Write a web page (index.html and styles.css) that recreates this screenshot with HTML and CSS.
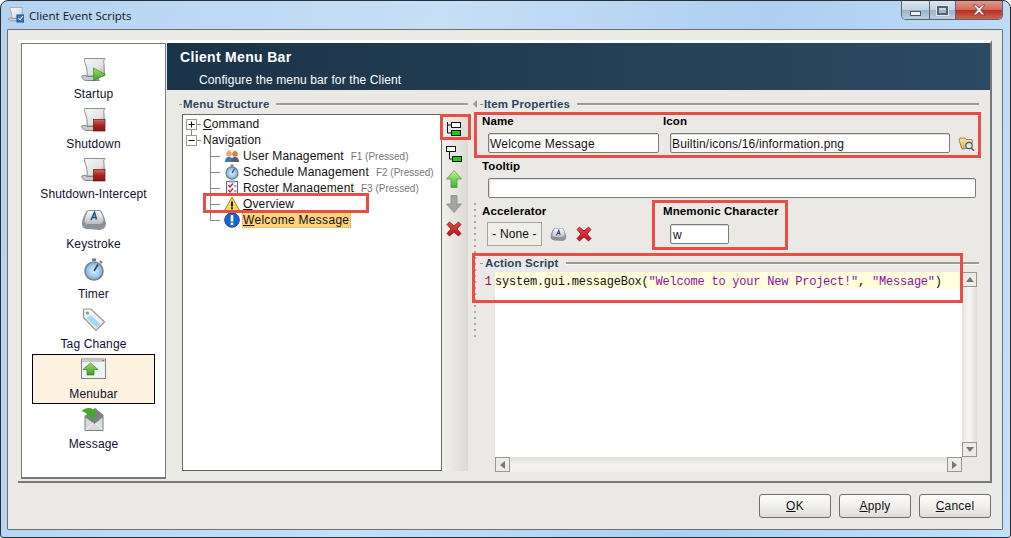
FILE: index.html
```html
<!DOCTYPE html>
<html lang="en">
<head>
<meta charset="utf-8">
<title>Client Event Scripts</title>
<link rel="stylesheet" href="styles.css">
</head>
<body>
<svg class="defs" width="0" height="0" aria-hidden="true">
  <defs>
    <linearGradient id="paper" x1="0" y1="0" x2="1" y2="1"><stop offset="0" stop-color="#f7f8f8"/><stop offset=".6" stop-color="#e2e4e4"/><stop offset="1" stop-color="#a9adad"/></linearGradient>
    <linearGradient id="green" x1="0" y1="0" x2="0" y2="1"><stop offset="0" stop-color="#a9dc70"/><stop offset="1" stop-color="#3c9a20"/></linearGradient>
    <linearGradient id="red" x1="0" y1="0" x2="0" y2="1"><stop offset="0" stop-color="#cf6a6a"/><stop offset=".5" stop-color="#a82424"/><stop offset="1" stop-color="#8a1414"/></linearGradient>
    <linearGradient id="keycap" x1="0" y1="0" x2="0" y2="1"><stop offset="0" stop-color="#fafafa"/><stop offset="1" stop-color="#b8bcc0"/></linearGradient>
    <radialGradient id="dial"><stop offset="0" stop-color="#e2f1fc"/><stop offset="1" stop-color="#72b2e6"/></radialGradient>
    <linearGradient id="upg" x1="0" y1="0" x2="0" y2="1"><stop offset="0" stop-color="#c6f29c"/><stop offset="1" stop-color="#3fae2c"/></linearGradient>
    <linearGradient id="folder" x1="0" y1="0" x2="0" y2="1"><stop offset="0" stop-color="#fbeeb4"/><stop offset="1" stop-color="#d4a94e"/></linearGradient>
    <linearGradient id="xred" x1="0" y1="0" x2="0" y2="1"><stop offset="0" stop-color="#e5474a"/><stop offset="1" stop-color="#b9141a"/></linearGradient>
    <symbol id="scroll" viewBox="0 0 26 24">
      <path d="M3.5 0.5 H24 C22.5 2 22.5 4 23 6 L23.5 18 H6 C6.5 14 6 10 4.5 6 C3.8 4 3 2 3.5 .5Z" fill="url(#paper)" stroke="#8c9090"/>
      <path d="M.7 18 C3 17 5 17.3 6 18.5 H17 C17 20 17.5 21.5 18.5 22.5 H5 C3 22.5 1.2 20.5 .7 18Z" fill="#c9cccc" stroke="#808484"/>
    </symbol>
    <symbol id="xmark" viewBox="0 0 16 16">
      <path d="M1 3.5 L3.5 1 L8 5 L12.5 1 L15 3.5 L11 8 L15 12.5 L12.5 15 L8 11 L3.5 15 L1 12.5 L5 8Z" fill="url(#xred)" stroke="#8e1015" stroke-width=".8"/>
    </symbol>
    <symbol id="key" viewBox="0 0 26 22">
      <path d="M7 1 H18 C21 1 24 9 25 14 C25 18 23 20 19 21 L7 20 C3 20 1 18 1 15 C1 10 4 3 7 1Z" fill="#8c9298"/>
      <path d="M7.5 2 H18 C20 2 22 7 22.5 11 C22 14 20 15 17 15 H7 C5 15 3.5 13.5 3.5 12 C4 8 5.5 4 7.5 2Z" fill="url(#keycap)"/>
    </symbol>
  </defs>
</svg>

<div class="window">
  <header class="titlebar">
    <div class="title">
      <svg class="title-icon" viewBox="0 0 16 16"><use href="#scroll" width="16" height="15"/><rect x="9" y="8" width="7" height="7" fill="#3b79c8" stroke="#214e8d"/><path d="M10.5 11 L12 13 L15 9" fill="none" stroke="#fff"/></svg>
      <span>Client Event Scripts</span>
    </div>
    <div class="controls">
      <div class="ctl ctl-min"><i></i></div>
      <div class="ctl ctl-max"><i></i></div>
      <div class="ctl ctl-close"><svg viewBox="0 0 13 11" width="16" height="12"><path d="M1 1 H4 L6.5 3.6 L9 1 H12 L8 5.5 L12 10 H9 L6.5 7.4 L4 10 H1 L5 5.5Z" fill="#f3ecec" stroke="#6c3636" stroke-width=".7"/></svg></div>
    </div>
  </header>

  <div class="client">
    <div class="main">
      <nav class="sidebar">
        <div class="nav-item">
          <svg class="nav-icon" viewBox="0 0 26 24"><use href="#scroll" width="26" height="24"/><path d="M12.5 10 L24.5 16.5 L12.5 23Z" fill="url(#green)" stroke="#3b8a22" stroke-width=".7"/></svg>
          <span>Startup</span>
        </div>
        <div class="nav-item">
          <svg class="nav-icon" viewBox="0 0 26 24"><use href="#scroll" width="26" height="24"/><rect x="12.5" y="11.5" width="11.5" height="11.5" fill="url(#red)" stroke="#701212" stroke-width=".7"/></svg>
          <span>Shutdown</span>
        </div>
        <div class="nav-item">
          <svg class="nav-icon" viewBox="0 0 26 24"><use href="#scroll" width="26" height="24"/><rect x="12.5" y="11.5" width="11.5" height="11.5" fill="url(#red)" stroke="#701212" stroke-width=".7"/></svg>
          <span>Shutdown-Intercept</span>
        </div>
        <div class="nav-item">
          <svg class="nav-icon" viewBox="0 0 26 24"><use href="#key" x="0" y="1" width="26" height="22"/><path d="M10 12 L13.5 4.5 L15.5 11.5 M11 9.5 H15" fill="none" stroke="#25527f" stroke-width="1.6"/></svg>
          <span>Keystroke</span>
        </div>
        <div class="nav-item">
          <svg class="nav-icon" viewBox="0 0 26 24"><rect x="11" y="0.5" width="4" height="2.5" fill="#777"/><path d="M19 3 L21 5" stroke="#777" stroke-width="2"/><circle cx="13" cy="13" r="9" fill="url(#dial)" stroke="#7d8284" stroke-width="1.6"/><path d="M13 13 L17 6.5" stroke="#25405c" stroke-width="1.6"/></svg>
          <span>Timer</span>
        </div>
        <div class="nav-item">
          <svg class="nav-icon" viewBox="0 0 26 24"><path d="M2.5 1 H10 L23.5 14 L15 22.5 L2.5 9.5Z" fill="#eff1f2" stroke="#92979a" stroke-width="1.2"/><circle cx="6.5" cy="5" r="1.6" fill="#8b9094"/><path d="M9.5 7 L19.5 16 L15.5 19.5 L6 10.5Z" fill="#a5d5f7"/></svg>
          <span>Tag Change</span>
        </div>
        <div class="nav-item is-selected">
          <svg class="nav-icon" viewBox="0 0 26 24"><rect x=".5" y="1" width="24" height="19.5" fill="#eef3f3" stroke="#7f8585"/><rect x="1" y="1.5" width="23" height="2.5" fill="#c6ccce"/><rect x="21" y="2" width="2" height="1" fill="#e04a4a"/><path d="M9.5 5 L17 11.5 H13 V17 H6 V11.5 H2Z" fill="url(#green)" stroke="#2f8a1e" stroke-width=".7"/></svg>
          <span>Menubar</span>
        </div>
        <div class="nav-item">
          <svg class="nav-icon" viewBox="0 0 26 24"><path d="M3.5 8 L14 0 L22.5 7 V23 H3.5Z" fill="#7d8283"/><path d="M4.5 9.5 L13.5 16 L21.5 9.5 V22 H4.5Z" fill="#d8dbdb"/><path d="M4.5 22 L12.5 15 M21.5 22 L14.5 15" stroke="#f6f6f6"/><path d="M.5 3 C4 0 9 -1 12 1.5 L15.5 .5 L14 8.5 L11 14 C10 8 6 5 .5 3Z" fill="#45a82f"/></svg>
          <span>Message</span>
        </div>
      </nav>

      <section class="content">
        <div class="banner">
          <h1>Client Menu Bar</h1>
          <p>Configure the menu bar for the Client</p>
        </div>
        <div class="panes">
          <div class="pane-left">
            <div class="group-title group-title-left"><b>Menu Structure</b></div>
            <div class="tree-row">
              <div class="tree">
                <div class="node node-root"><span class="box"><svg viewBox="0 0 9 9" width="9" height="9"><path d="M1.5 4.5 H7.5 M4.5 1.5 V7.5" stroke="#111"/></svg></span><span class="stub-root"></span><span class="label"><u>C</u>ommand</span></div>
                <div class="node node-root node-root-next"><span class="box"><svg viewBox="0 0 9 9" width="9" height="9"><path d="M1.5 4.5 H7.5" stroke="#111"/></svg></span><span class="stub-root"></span><span class="label">Navigation</span></div>
                <div class="node node-child">
                  <span class="stub"></span>
                  <svg class="tree-icon" viewBox="0 0 16 16"><circle cx="5" cy="6" r="2.8" fill="#e8a868"/><path d="M1 14 C1 10 3 9 5 9 C7 9 9 10 9 14Z" fill="#3a78c8"/><circle cx="11" cy="6" r="2.8" fill="#c08850"/><path d="M7 14 C7 10 9 9 11 9 C13 9 15 10 15 14Z" fill="#555f6a"/><path d="M3 3.6 C4 2 6 2 7 3.6 Z M9 3.6 C10 2 12 2 13 3.6Z" fill="#e69a25"/></svg>
                  <span class="label">User Management</span><span class="hint">F1 (Pressed)</span>
                </div>
                <div class="node node-child">
                  <span class="stub"></span>
                  <svg class="tree-icon" viewBox="0 0 16 16"><rect x="6.5" y=".5" width="3" height="2" fill="#777"/><circle cx="8" cy="9" r="6" fill="url(#dial)" stroke="#7d8284" stroke-width="1.3"/><path d="M8 9 L10.5 5" stroke="#25405c" stroke-width="1.2"/></svg>
                  <span class="label">Schedule Management</span><span class="hint">F2 (Pressed)</span>
                </div>
                <div class="node node-child">
                  <span class="stub"></span>
                  <svg class="tree-icon" viewBox="0 0 16 16"><rect x="2.5" y="1.5" width="11" height="14" fill="#f7f8ff" stroke="#4e68a8"/><rect x="5" y="0.5" width="6" height="2" fill="#8c96b0"/><path d="M4.5 5 L6 7 L9 3.5 M4.5 10 L6 12 L9 8.5" fill="none" stroke="#d22525" stroke-width="1.4"/><path d="M10 6 H12.5 M10 11 H12.5" stroke="#667"/></svg>
                  <span class="label">Roster Management</span><span class="hint">F3 (Pressed)</span>
                </div>
                <div class="node node-child">
                  <span class="stub"></span>
                  <svg class="tree-icon" viewBox="0 0 16 16"><path d="M8 1 L15.5 14.5 H.5Z" fill="#fbdb4b" stroke="#a98a1c"/><rect x="7" y="5.5" width="2" height="5" fill="#1c1c1c"/><rect x="7" y="11.3" width="2" height="2" fill="#1c1c1c"/></svg>
                  <span class="label"><u>O</u>verview</span>
                </div>
                <div class="node node-child node-last">
                  <span class="stub"></span>
                  <svg class="tree-icon" viewBox="0 0 16 16"><circle cx="8" cy="8" r="7.3" fill="#1c63c8" stroke="#134a99"/><rect x="6.7" y="3" width="2.6" height="6.5" fill="#fff"/><rect x="6.7" y="10.6" width="2.6" height="2.6" fill="#fff"/></svg>
                  <span class="label label-sel"><u>W</u>elcome Message</span>
                </div>
              </div>
              <div class="toolbar">
                <div class="tool"><svg viewBox="0 0 16 16" width="16" height="16"><rect x="5.5" y="1.5" width="9" height="5" fill="#fff" stroke="#111"/><rect x="5.5" y="9.5" width="9" height="5" fill="#0fd40f" stroke="#111"/><path d="M1.5 1 V12 H5.5 M1.5 4 H5.5" fill="none" stroke="#111"/></svg></div>
                <div class="tool"><svg viewBox="0 0 16 16" width="16" height="16"><rect x=".5" y=".5" width="9" height="5" fill="#fff" stroke="#111"/><rect x="6.5" y="10.5" width="9" height="5" fill="#0fd40f" stroke="#111"/><path d="M3.5 6 V13 H6.5" fill="none" stroke="#111"/></svg></div>
                <div class="tool"><svg viewBox="0 0 16 18" width="16" height="18"><path d="M8 .5 L15.5 9 H11 V17.5 H5 V9 H.5Z" fill="url(#upg)" stroke="#4f9a3c" stroke-width=".8"/></svg></div>
                <div class="tool"><svg viewBox="0 0 16 18" width="16" height="18"><path d="M5 .5 H11 V9 H15.5 L8 17.5 L.5 9 H5Z" fill="#a4a4a2" stroke="#8c8c8a" stroke-width=".8"/></svg></div>
                <div class="tool"><svg width="16" height="16"><use href="#xmark" width="16" height="16"/></svg></div>
              </div>
            </div>
          </div>

          <div class="splitter"><i class="tri"></i><i class="grip"></i></div>

          <div class="pane-right">
            <div class="group-title group-title-right"><b>Item Properties</b></div>
            <div class="fields-top">
              <label class="field-label">Name</label>
              <label class="field-label">Icon</label>
              <span></span>
              <div class="input input-name">Welcome Message</div>
              <div class="input input-icon">Builtin/icons/16/information.png</div>
              <svg class="folder" viewBox="0 0 17 17"><path d="M1 5 L2 3 H7 L8 4.5 H14 L14.5 7 L11 13 L4 14 Z" fill="url(#folder)" stroke="#8a6b2a" stroke-width=".8"/><circle cx="11" cy="10.5" r="3.2" fill="#cfe6f4" stroke="#55585a" stroke-width="1.2"/><path d="M13.2 13 L16 15.8" stroke="#7a5520" stroke-width="1.6"/></svg>
            </div>
            <label class="field-label tooltip-label">Tooltip</label>
            <div class="input input-tooltip"></div>
            <div class="accel-row">
              <div class="accel">
                <label class="field-label">Accelerator</label>
                <div class="accel-controls">
                  <div class="none-btn">- None -</div>
                  <svg class="small-key" viewBox="0 0 26 22"><use href="#key" width="26" height="22"/><path d="M10 12 L13.5 4.5 L15.5 11.5 M11 9.5 H15" fill="none" stroke="#25527f" stroke-width="1.6"/></svg>
                  <svg class="small-x" width="16" height="16"><use href="#xmark" width="16" height="16"/></svg>
                </div>
              </div>
              <div class="mnemonic">
                <label class="field-label">Mnemonic Character</label>
                <div class="input input-mnemonic">w</div>
              </div>
            </div>
            <div class="group-title group-title-script"><b>Action Script</b></div>
            <div class="editor">
              <div class="gutter"><span class="line-no">1</span></div>
              <div class="code"><div class="code-line">system.gui.messageBox(<span class="str">"Welcome to your New Project!"</span>, <span class="str">"Message"</span>)</div></div>
              <div class="vbar"><div class="sbtn"><i class="arr arr-up"></i></div><div class="sbtn"><i class="arr arr-down"></i></div></div>
              <div class="hbar"><div class="sbtn"><i class="arr arr-left"></i></div><div class="sbtn"><i class="arr arr-right"></i></div></div>
            </div>
          </div>
        </div>
      </section>
    </div>

    <footer class="footer">
      <button class="btn"><u>O</u>K</button>
      <button class="btn"><u>A</u>pply</button>
      <button class="btn"><u>C</u>ancel</button>
    </footer>
  </div>

  <div class="mark mark-tool"></div>
  <div class="mark mark-overview"></div>
  <div class="mark mark-nameicon"></div>
  <div class="mark mark-mnemonic"></div>
  <div class="mark mark-script"></div>
</div>
</body>
</html>
```

FILE: styles.css
```css
* { box-sizing: border-box; }
html, body { margin: 0; padding: 0; background: #fff; }
body { width: 1011px; height: 538px; overflow: hidden; font-family: "Liberation Sans", Arial, sans-serif; font-size: 12px; color: #111; }
.defs { position: absolute; }
svg { display: block; }

.window { position: relative; width: 1011px; height: 538px; display: flex; flex-direction: column; padding: 0 7px 7px 6px; border: 1px solid #2c2f33; border-radius: 8px 8px 3px 3px; background: linear-gradient(100deg, #b4d3f1 0%, #c7dff7 40%, #aecff0 70%, #c4e0fb 100%); }

.titlebar { height: 28px; flex: none; display: flex; justify-content: space-between; align-items: flex-start; }
.title { display: flex; align-items: center; gap: 5px; height: 28px; padding: 0 0 0 1px; font-family: "Open Sans", sans-serif; font-size: 11.5px; color: #10161c; }
.title-icon { width: 16px; height: 16px; }
.controls { display: flex; height: 19px; border: 1px solid #5b6672; border-top: 0; border-radius: 0 0 5px 5px; overflow: hidden; }
.ctl { height: 18px; display: flex; align-items: center; justify-content: center; background: linear-gradient(#dbe6f1 0%, #c2d3e4 48%, #9fb3c6 52%, #bcd0e2 100%); border-right: 1px solid #5b6672; }
.ctl-min { width: 28px; }
.ctl-min i { display: block; width: 11px; height: 5px; margin-top: 7px; background: #eef3f7; border: 1px solid #4b5866; }
.ctl-max { width: 26px; }
.ctl-max i { display: block; width: 11px; height: 9px; background: transparent; border: 2px solid #56636f; outline: 1px solid #dfe8f0; }
.ctl-close { width: 46px; border-right: 0; background: linear-gradient(#e2998c 0%, #cf6a5a 48%, #b5301f 52%, #cf6453 100%); }

.client { flex: 1; min-height: 0; display: flex; flex-direction: column; padding: 10px 10px 0 10px; background: #ebe9e6; border: 1px solid #6c7074; border-radius: 1px; }

.main { display: flex; flex: none; height: 443px; width: 974px; padding: 0 0 2px 3px; gap: 1px; background: #ebe9e6; border-top: 3px solid #fff; border-right: 2px solid #77787a; border-bottom: 2px solid #77787a; }

.sidebar { width: 145px; flex: none; background: #fff; border: 1px solid #77787a; border-bottom-width: 2px; padding: 10px 10px 0 10px; }
.nav-item { height: 50px; display: flex; flex-direction: column; align-items: center; padding-top: 3px; border: 1px solid transparent; }
.nav-item span { display: block; margin-top: auto; padding-bottom: 2px; line-height: 14px; white-space: nowrap; font-size: 12px; color: #101030; letter-spacing: .13px; }
.nav-item.is-selected { background: #fdf2df; border-color: #000; }
.nav-icon { width: 26px; height: 24px; flex: none; }

.content { flex: 1; min-width: 0; display: flex; flex-direction: column; }
.banner { height: 47px; flex: none; padding: 6px 0 0 13px; background: linear-gradient(90deg, #1b3348, #2c4a62); color: #fff; }
.banner h1 { margin: 0; font-size: 14px; line-height: 16px; font-weight: 700; letter-spacing: .33px; }
.banner p { margin: 8px 0 0 19px; line-height: 14px; font-size: 12px; letter-spacing: .13px; }

.panes { flex: 1; min-height: 0; display: flex; }
.pane-left { width: 301px; flex: none; padding: 8px 0 0 15px; display: flex; flex-direction: column; }

.group-title { height: 12px; flex: none; display: flex; align-items: center; color: #2a4560; font-size: 11.5px; }
.group-title b { letter-spacing: .15px; white-space: nowrap; margin-left: 1px; }
.group-title::before { content: ""; width: 3px; height: 1px; flex: none; background: #9a9a96; }
.group-title::after { content: ""; flex: 1; margin-left: 7px; height: 2px; background: #9a9a96; border-bottom: 1px solid #f7f6f4; }
.group-title-left { margin-left: -3px; }

.tree-row { display: flex; flex: none; margin-top: 4px; height: 357px; }
.tree { width: 260px; flex: none; background: #fff; border: 1px solid #66686a; padding: 1px 0 0 3px; position: relative; }
.node { height: 16px; display: flex; align-items: center; white-space: nowrap; position: relative; }
.box { width: 11px; height: 11px; flex: none; border: 1px solid #9c9b8d; background: #fff; display: flex; align-items: center; justify-content: center; position: relative; z-index: 1; }
.stub-root { width: 4px; height: 1px; background: #8a8a84; margin-right: 2px; flex: none; }
.node-root-next::before { content: ""; position: absolute; left: 5px; top: -4px; width: 1px; height: 8px; background: #8a8a84; }
.label { font-size: 12px; line-height: 16px; letter-spacing: .13px; color: #111; }
.node-child { padding-left: 24px; }
.node-child::before { content: ""; position: absolute; left: 24px; top: -8px; width: 1px; height: 16px; background: #8a8a84; }
.stub { width: 10px; height: 1px; background: #8a8a84; flex: none; margin-right: 4px; }
.tree-icon { width: 16px; height: 16px; flex: none; margin-right: 3px; }
.hint { margin-left: 7px; font-size: 10px; color: #777; }
.label-sel { background: #fbd27d; margin-left: -1px; padding: 0 2px 0 1px; letter-spacing: .3px; outline: 1px dotted #e0a840; outline-offset: -1px; }

.toolbar { width: 26px; flex: none; display: flex; flex-direction: column; padding-top: 2px; background: linear-gradient(90deg, #f1f0ed, #dcdad5); }
.tool { height: 25px; width: 24px; flex: none; display: flex; align-items: center; justify-content: center; }

.splitter { width: 8px; flex: none; display: flex; flex-direction: column; position: relative; padding: 113px 0 0 6px; }
.tri { position: absolute; left: 5px; top: 10px; border: 4px solid transparent; border-left: 0; border-right: 4px solid #9c9c98; }
.grip { display: block; width: 2px; height: 135px; background: repeating-linear-gradient(#a8a8a4 0 2px, transparent 2px 6px); }

.pane-right { flex: 1; min-width: 0; padding: 8px 0 0 0; display: flex; flex-direction: column; }
.group-title-right { margin-left: 4px; margin-right: 11px; }
.group-title-script { margin-left: 4px; margin-top: 11px; margin-right: 11px; }
.group-title-script b { margin-left: 2px; }

.field-label { display: block; flex: none; font-weight: 700; font-size: 11.5px; line-height: 12px; color: #000; letter-spacing: .1px; }
.input { flex: none; height: 20px; background: #fff; border: 1px solid #7d7d78; border-radius: 2px; box-shadow: inset 1px 1px 0 #ddd; font-size: 12px; line-height: 20px; padding-left: 1px; letter-spacing: .2px; white-space: nowrap; overflow: hidden; color: #111; }

.fields-top { flex: none; display: grid; grid-template-columns: 181px 287px 16px; grid-template-rows: 12px 20px; row-gap: 6px; margin-top: 5px; padding-left: 6px; }
.fields-top .input-name { margin-left: 6px; width: 171px; }
.fields-top .input-icon { margin-left: 7px; width: 280px; letter-spacing: .17px; }
.folder { width: 17px; height: 17px; margin-top: 2px; margin-left: 8px; }

.tooltip-label { margin: 7px 0 0 6px; }
.input-tooltip { margin: 6px 14px 0 12px; }

.accel-row { display: flex; flex: none; margin-top: 7px; padding-left: 6px; }
.accel { width: 181px; flex: none; }
.accel-controls { display: flex; align-items: center; margin-top: 5px; padding-left: 5px; }
.none-btn { width: 55px; height: 24px; border: 1px solid #a4a49e; background: #efeee9; line-height: 22px; text-align: center; font-size: 12px; letter-spacing: .13px; }
.small-key { width: 17px; height: 15px; margin-left: 8px; }
.small-x { margin-left: 9px; }
.mnemonic .input-mnemonic { width: 59px; margin: 7px 0 0 7px; padding-left: 2px; }

.editor { flex: none; height: 200px; margin-top: 3px; display: grid; grid-template-columns: 19px 467px 15px; grid-template-rows: 185px 15px; }
.gutter { text-align: right; padding-right: 3px; }
.line-no { display: block; font-family: "Liberation Mono", monospace; font-size: 12px; line-height: 21px; color: #a01020; }
.code { background: #fff; overflow: hidden; }
.code-line { height: 17px; background: #ffffdc; font-family: "Liberation Mono", monospace; font-size: 12px; line-height: 21px; letter-spacing: -.22px; color: #111; white-space: nowrap; }
.str { color: #8a0fb0; }
.vbar { display: flex; flex-direction: column; justify-content: space-between; background: linear-gradient(90deg, #e7e5e1, #f7f6f4, #ddd); }
.hbar { grid-column: 2; display: flex; justify-content: space-between; background: linear-gradient(#dedcd7, #f3f2ef 50%, #f1f0ed); }
.sbtn { width: 15px; height: 15px; border: 1px solid #98968f; background: #ecebe7; display: flex; align-items: center; justify-content: center; }
.arr { display: block; width: 0; height: 0; border: 4px solid transparent; }
.arr-up { border-bottom: 5px solid #777; border-top: 0; }
.arr-down { border-top: 5px solid #777; border-bottom: 0; }
.arr-left { border-right: 5px solid #777; border-left: 0; }
.arr-right { border-left: 5px solid #777; border-right: 0; }

.footer { flex: 1; display: flex; justify-content: flex-end; gap: 8px; padding: 11px 1px 0 0; }
.btn { width: 72px; height: 24px; padding: 0; font: 12px "Liberation Sans", sans-serif; letter-spacing: .2px; color: #111; background: linear-gradient(#fbfbfa, #f1f0ed 50%, #dedcd6); border: 1px solid #6f6f6a; border-radius: 3px; }

.mark { position: absolute; border: 3px solid #ea4c46; pointer-events: none; }
.mark-tool { left: 439px; top: 113px; width: 31px; height: 26px; }
.mark-overview { left: 202px; top: 192px; width: 166px; height: 20px; }
.mark-nameicon { left: 473px; top: 111px; width: 507px; height: 46px; }
.mark-mnemonic { left: 651px; top: 199px; width: 136px; height: 50px; }
.mark-script { left: 471px; top: 252px; width: 491px; height: 50px; }
```
